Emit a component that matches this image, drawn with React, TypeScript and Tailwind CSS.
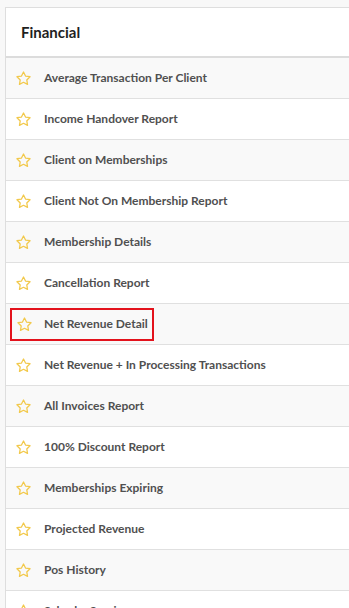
const reports = [
  'Average Transaction Per Client',
  'Income Handover Report',
  'Client on Memberships',
  'Client Not On Membership Report',
  'Membership Details',
  'Cancellation Report',
  'Net Revenue Detail',
  'Net Revenue + In Processing Transactions',
  'All Invoices Report',
  '100% Discount Report',
  'Memberships Expiring',
  'Projected Revenue',
  'Pos History',
  'Sales by Service',
];

function Star() {
  return (
    <svg className="shrink-0" width="17" height="17" viewBox="0 0 24 24" fill="none" stroke="#f2c94c" strokeWidth="1.8" strokeLinejoin="round">
      <path d="M12 2.8l2.85 5.78 6.38.93-4.62 4.5 1.09 6.36L12 17.37l-5.7 3 1.09-6.36-4.62-4.5 6.38-.93z" />
    </svg>
  );
}

export default function App() {
  return (
    <div className="min-h-[608px] bg-[#f8f8f8] pl-[5px] pt-[7px] font-['Lato',sans-serif]">
      <div className="w-[360px] border-l border-t border-[#dedede] bg-white">
        <div className="flex h-[50px] items-center border-b-2 border-[#dcdcdc] pl-[15px] pt-[1px]">
          <h2 className="text-[15px] font-bold text-[#1f1f1f]">Financial</h2>
        </div>
        {reports.map((name, i) => (
          <div
            key={name}
            className={`flex h-[41px] items-center border-b border-[#e0e0e0] pl-[9px] ${i % 2 === 0 ? 'bg-[#f9f9f9]' : 'bg-white'}`}
          >
            {name === 'Net Revenue Detail' ? (
              <div className="-ml-[5px] flex h-[33px] w-[144px] shrink-0 items-center border-2 border-[#e3121c] pl-[4px]">
                <Star />
                <span className="ml-[11px] whitespace-nowrap text-[12px] font-bold text-[#505050]">{name}</span>
              </div>
            ) : (
              <>
                <Star />
                <span className="ml-[12px] whitespace-nowrap text-[12px] font-bold text-[#505050]">{name}</span>
              </>
            )}
          </div>
        ))}
      </div>
    </div>
  );
}
